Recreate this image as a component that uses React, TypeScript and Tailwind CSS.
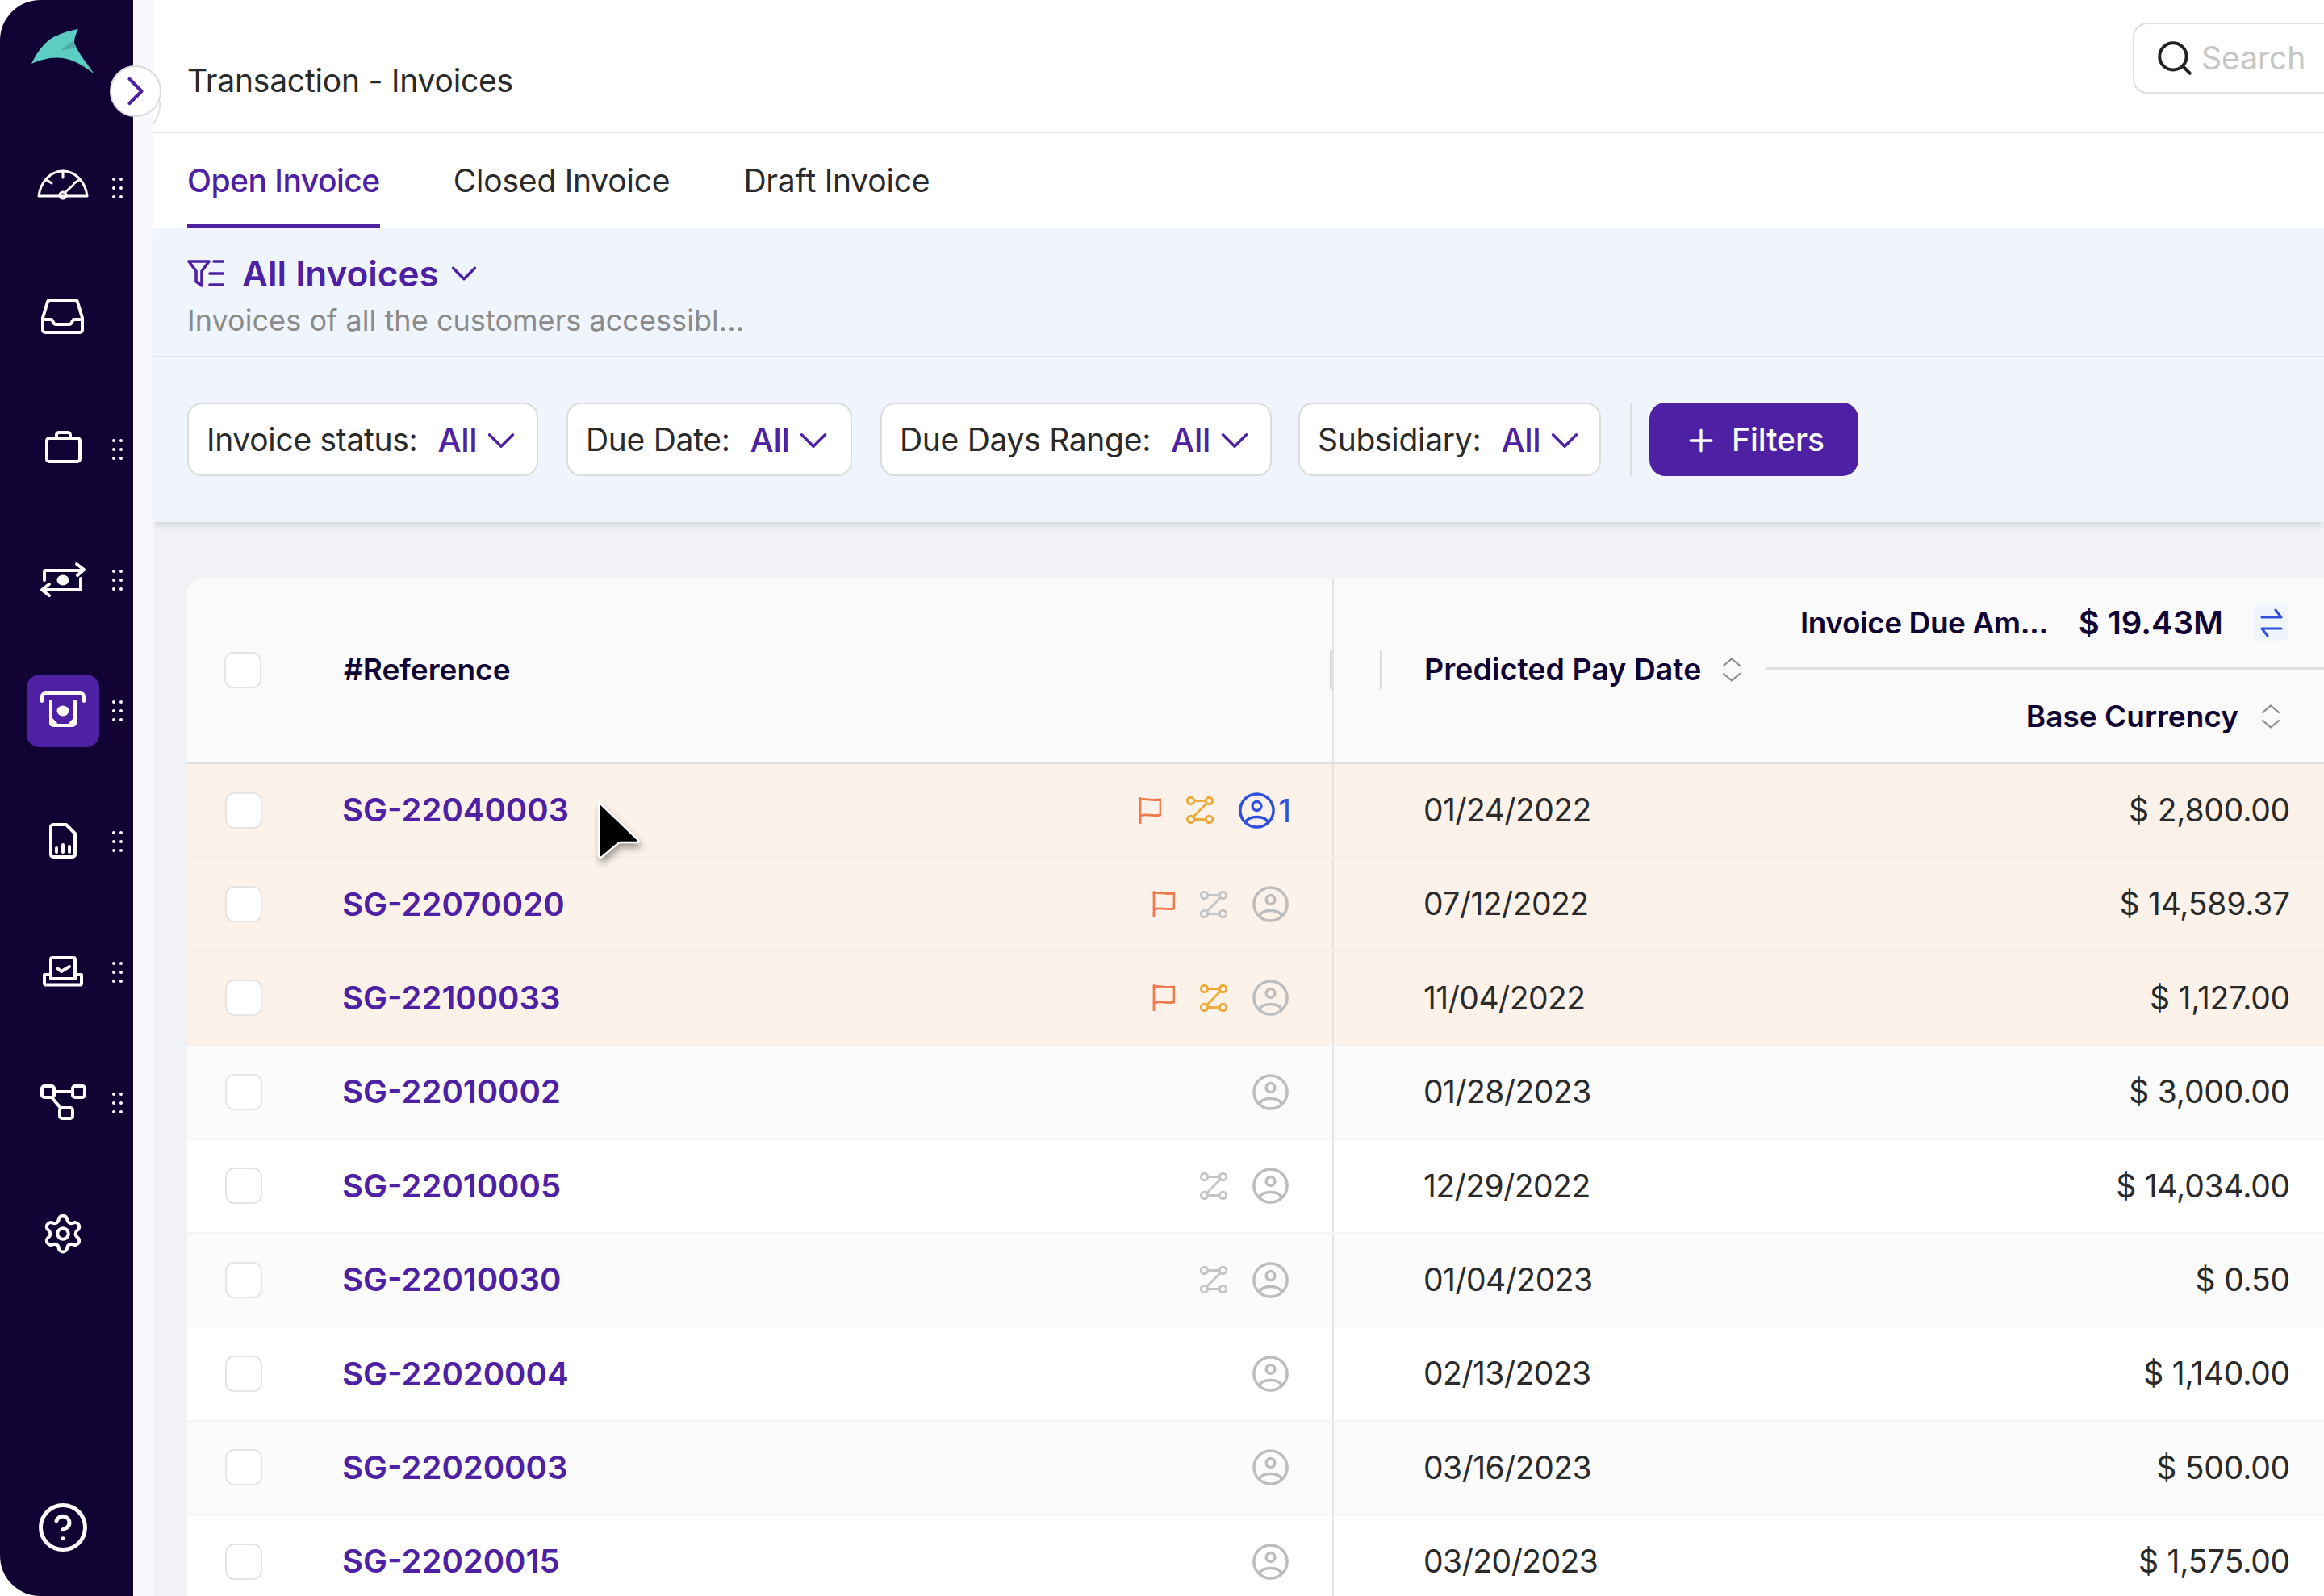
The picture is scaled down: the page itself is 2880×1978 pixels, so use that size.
import { ChevronDown, ChevronRight, CircleHelp, Plus, Search, Settings } from "lucide-react";

type Row = {
  ref: string;
  date: string;
  amount: string;
  flag?: boolean;
  route?: "orange" | "gray";
  assigned?: boolean;
};

const rows: Row[] = [
  { ref: "SG-22040003", date: "01/24/2022", amount: "$ 2,800.00", flag: true, route: "orange", assigned: true },
  { ref: "SG-22070020", date: "07/12/2022", amount: "$ 14,589.37", flag: true, route: "gray" },
  { ref: "SG-22100033", date: "11/04/2022", amount: "$ 1,127.00", flag: true, route: "orange" },
  { ref: "SG-22010002", date: "01/28/2023", amount: "$ 3,000.00" },
  { ref: "SG-22010005", date: "12/29/2022", amount: "$ 14,034.00", route: "gray" },
  { ref: "SG-22010030", date: "01/04/2023", amount: "$ 0.50", route: "gray" },
  { ref: "SG-22020004", date: "02/13/2023", amount: "$ 1,140.00" },
  { ref: "SG-22020003", date: "03/16/2023", amount: "$ 500.00" },
  { ref: "SG-22020015", date: "03/20/2023", amount: "$ 1,575.00" },
];

const filters = [
  { label: "Invoice status:", cls: "w-[435px]" },
  { label: "Due Date:", cls: "ml-[35px] w-[354px]" },
  { label: "Due Days Range:", cls: "ml-[35px] w-[485px]" },
  { label: "Subsidiary:", cls: "ml-[33px] w-[375px]" },
];

function NavSvg({ children }: { children: React.ReactNode }) {
  return (
    <svg width="72" height="72" viewBox="0 0 72 72" fill="none" stroke="white" strokeWidth="4" strokeLinecap="round" strokeLinejoin="round">
      {children}
    </svg>
  );
}

function Dots() {
  return (
    <div className="ml-[16px] grid grid-cols-2 gap-x-[5px] gap-y-[7px]">
      {[0, 1, 2, 3, 4, 5].map((i) => (
        <span key={i} className="h-[4px] w-[4px] rounded-full bg-white" />
      ))}
    </div>
  );
}

function NavItem({ children, dots = true, active = false }: { children: React.ReactNode; dots?: boolean; active?: boolean }) {
  return (
    <div className="flex h-[162px] items-center pl-[33px]">
      <div className={`flex h-[90px] w-[90px] items-center justify-center rounded-[16px] ${active ? "bg-[#4d20a4]" : ""}`}>{children}</div>
      {dots && <Dots />}
    </div>
  );
}

function FlagIcon() {
  return (
    <svg width="28" height="33" viewBox="0 0 28 33" fill="none" stroke="#ee7a4e" strokeWidth="2.8" strokeLinecap="round" strokeLinejoin="round">
      <path d="M2 1.5V32" />
      <path d="M2 3C9 1 14 5 27 3V22C15 24 10 20 2 23" />
    </svg>
  );
}

function RouteIcon({ tone }: { tone: "orange" | "gray" }) {
  const c = tone === "orange" ? "#eeaa3a" : "#c3c5c7";
  return (
    <svg width="34" height="34" viewBox="0 0 34 34" fill="none" stroke={c} strokeWidth="2.9" strokeLinecap="round">
      <circle cx="5.5" cy="5.5" r="4.2" />
      <circle cx="28.5" cy="5.5" r="4.2" />
      <circle cx="5.5" cy="28.5" r="4.2" />
      <circle cx="28.5" cy="28.5" r="4.2" />
      <path d="M10 5.5H24M10 28.5H24M25.5 8.5L8.5 25.5" />
    </svg>
  );
}

function UserIcon({ color }: { color: string }) {
  return (
    <svg width="45" height="45" viewBox="0 0 45 45" fill="none" stroke={color} strokeWidth="3.5">
      <circle cx="22.5" cy="22.5" r="20.6" />
      <circle cx="22.5" cy="17" r="5.4" />
      <path d="M9 36.5C13 28.5 32 28.5 36 36.5" />
    </svg>
  );
}

function SortIcon() {
  return (
    <svg width="24" height="30" viewBox="0 0 24 30" fill="none" stroke="#8a8a8a" strokeWidth="2.2" strokeLinecap="round" strokeLinejoin="round">
      <path d="M2 10L12 1.5L22 10" />
      <path d="M2 20L12 28.5L22 20" />
    </svg>
  );
}

function Checkbox() {
  return <div className="h-[45px] w-[46px] shrink-0 rounded-[11px] border-2 border-[#e5e5e7] bg-white" />;
}

export default function App() {
  return (
    <div className="relative flex h-[1978px] w-[2880px] overflow-hidden bg-white font-['Inter',sans-serif] text-[#2a2a2a]">
      {/* Sidebar */}
      <aside className="flex w-[165px] shrink-0 flex-col rounded-l-[50px] bg-[#100334] pt-[36px]">
        <svg className="ml-[39px] mb-[60px] shrink-0" width="78" height="56" viewBox="0 0 78 56">
          <path d="M0 43C6 30 14 19 24 12C34 6 46 2 58 0C55 5 53 11 53 17C58 30 70 44 78 56C66 46 52 38 39 36C26 34 11 38 0 43Z" fill="#5ccdc2" />
          <path d="M36 27C41 22 46 18 52 15C53 19 54 21 55 24C48 24 42 25 36 27Z" fill="#4fa9a4" />
        </svg>
        <NavItem>
          <NavSvg>
            <g transform="translate(0 -5)">
              <path d="M6 51H31M41 51H66C64 34 52 20 36 20C20 20 8 34 6 51Z" strokeWidth="3" />
              <path d="M36 20V28M16 31L22 35M56 31L50 35M39 46L49 37" strokeWidth="3" />
              <circle cx="36" cy="50" r="4" strokeWidth="3" />
            </g>
          </NavSvg>
        </NavItem>
        <NavItem dots={false}>
          <NavSvg>
            <g transform="translate(0 -3)">
              <path d="M20 16H51A3 3 0 0 1 54 18L60 38V53A3 3 0 0 1 57 56H14A3 3 0 0 1 11 53V38L17 18A3 3 0 0 1 20 16Z" />
              <path d="M11 40H22L25 45A3 3 0 0 0 27 46H44A3 3 0 0 0 46 45L49 40H60" />
            </g>
          </NavSvg>
        </NavItem>
        <NavItem>
          <NavSvg>
            <rect x="16" y="22" width="41" height="29" rx="3" />
            <path d="M28 22V18A3 3 0 0 1 31 15H42A3 3 0 0 1 45 18V22" />
          </NavSvg>
        </NavItem>
        <NavItem>
          <NavSvg>
            <path d="M13 36V26A2 2 0 0 1 15 24H60M53 16L62 23L54 30" />
            <path d="M58 34V46A2 2 0 0 1 56 48H11M19 41L10 48L19 55" />
            <ellipse cx="36" cy="36" rx="7.5" ry="6.5" fill="white" stroke="none" />
          </NavSvg>
        </NavItem>
        <NavItem active>
          <NavSvg>
            <path d="M10 24V18A4 4 0 0 1 14 14H58A4 4 0 0 1 62 18V24" />
            <path d="M21 24V51A3 3 0 0 0 24 54H48A3 3 0 0 0 51 51V24M21 46L27 52M51 46L45 52" />
            <ellipse cx="36" cy="36" rx="7.5" ry="6.5" fill="white" stroke="none" />
          </NavSvg>
        </NavItem>
        <NavItem>
          <NavSvg>
            <path d="M24 15H40L51 26V52A3 3 0 0 1 48 55H24A3 3 0 0 1 21 52V18A3 3 0 0 1 24 15Z" />
            <path d="M28 49V44M36 49V40M44 49V42" />
          </NavSvg>
        </NavItem>
        <NavItem>
          <NavSvg>
            <path d="M21 44V20A2 2 0 0 1 23 18H49A2 2 0 0 1 51 20V44Z" />
            <path d="M19 39H13V50A1.5 1.5 0 0 0 14.5 51.5H57.5A1.5 1.5 0 0 0 59 50V39H53" />
            <path d="M29 31L34 35L44 29" />
          </NavSvg>
        </NavItem>
        <NavItem>
          <NavSvg>
            <rect x="10" y="15" width="15" height="14" rx="3" />
            <rect x="48" y="15" width="15" height="14" rx="3" />
            <rect x="32" y="42" width="16" height="13" rx="3" />
            <path d="M25 22H48M22 29L33 42" />
          </NavSvg>
        </NavItem>
        <NavItem dots={false}>
          <Settings size={54} color="white" strokeWidth={1.8} />
        </NavItem>
        <div className="mt-auto flex justify-center pb-[52px]">
          <CircleHelp size={66} color="white" strokeWidth={1.8} className="-translate-x-[5px]" />
        </div>
      </aside>

      <div className="w-[24px] shrink-0 bg-[#f8f9ff]" />

      {/* Main */}
      <main className="flex min-w-0 flex-1 flex-col">
        <header className="flex h-[165px] shrink-0 items-start justify-between border-b-2 border-[#e3e3e3]">
          <h1 className="ml-[43px] mt-[75px] text-[39px] leading-[50px] tracking-[-0.2px]">Transaction - Invoices</h1>
          <div className="mt-[28px] mr-[-190px] flex h-[88px] w-[427px] shrink-0 items-center gap-[8px] rounded-[18px] border-2 border-[#dedede] pl-[25px]">
            <Search size={50} color="#222" strokeWidth={1.9} />
            <span className="text-[39px] text-[#c6c6c6]">Search</span>
          </div>
        </header>

        <nav className="flex h-[117px] shrink-0 items-stretch gap-[91px] pl-[43px] text-[39px] tracking-[-0.2px]">
          <div className="flex items-center border-b-[5px] border-[#4d20a4] pt-[7px] font-medium tracking-[-0.5px] text-[#4d20a4]">Open Invoice</div>
          <div className="flex items-center pt-[2px]">Closed Invoice</div>
          <div className="flex items-center pt-[2px]">Draft Invoice</div>
        </nav>

        <section className="relative z-10 h-[365px] shrink-0 bg-[#f0f4fd] shadow-[0_7px_7px_-3px_rgba(0,0,0,0.12)]">
          <div className="h-[161px] border-b-2 border-[#e3e5ea] pl-[43px] pt-[30px]">
            <div className="flex items-center text-[#4d20a4]">
              <svg width="46" height="36" viewBox="0 0 46 36" fill="none" stroke="#4d20a4" strokeWidth="3.6" strokeLinecap="round" strokeLinejoin="round">
                <path d="M2 3H27L18 15V33L11 28V15Z" />
                <path d="M33 3H45M28 18H45M28 32H45" />
              </svg>
              <span className="ml-[22px] text-[44px] font-semibold leading-[48px]">All Invoices</span>
              <ChevronDown size={54} className="ml-[4px]" strokeWidth={1.5} />
            </div>
            <p className="mt-[9px] text-[36px] leading-[44px] tracking-[0.05px] text-[#8b8b8b]">Invoices of all the customers accessibl...</p>
          </div>
          <div className="flex items-center pl-[43px] pt-[56px]">
            {filters.map((f) => (
              <div key={f.label} className={`flex h-[91px] shrink-0 items-center rounded-[18px] border-2 border-[#dcdcdc] bg-white pl-[22px] pt-[2px] text-[39px] tracking-[-0.3px] ${f.cls}`}>
                <span>{f.label}</span>
                <span className="ml-[25px] text-[41px] font-medium text-[#4d20a4]">All</span>
                <ChevronDown size={58} color="#4d20a4" strokeWidth={1.4} className="ml-[1px]" />
              </div>
            ))}
            <div className="ml-[36px] h-[91px] w-[3px] bg-[#dcdde0]" />
            <button className="ml-[21px] flex h-[91px] w-[259px] items-center justify-center gap-[16px] rounded-[20px] bg-[#4d20a4] pt-[2px] text-[39px] font-medium text-white">
              <Plus size={44} strokeWidth={1.8} />
              Filters
            </button>
          </div>
        </section>

        {/* Table */}
        <section className="flex-1 bg-[#f1f2f6] pl-[43px] pt-[69px]">
          <div className="overflow-hidden rounded-tl-[20px] bg-white">
            <div className="flex h-[231px] border-b-[3px] border-[#e0e0e0] bg-[#fafafa] text-[#100334]">
              <div className="flex w-[1419px] shrink-0 items-center pl-[46px]">
                <Checkbox />
                <span className="ml-[102px] text-[37px] font-semibold">#Reference</span>
                <div className="ml-auto h-[48px] w-[3px] bg-[#dcdcdc]" />
              </div>
              <div className="flex flex-1 items-center border-l-2 border-[#e3e3e3]">
                <div className="ml-[57px] h-[48px] w-[3px] bg-[#dcdcdc]" />
                <span className="ml-[52px] text-[37.5px] font-semibold">Predicted Pay Date</span>
                <div className="ml-[26px]"><SortIcon /></div>
                <div className="ml-[31px] flex h-full flex-1 flex-col text-[37px] font-semibold">
                  <div className="flex h-[114px] items-center justify-end border-b-[3px] border-[#e0e0e0] pr-[44px]">
                    <span className="tracking-[-0.45px]">Invoice Due Am...</span>
                    <span className="ml-[38px] text-[40px]">$ 19.43M</span>
                    <div className="ml-[38px] flex h-[46px] w-[43px] items-center justify-center rounded-[8px] bg-[#f0f4fd]">
                      <svg width="28" height="36" viewBox="0 0 28 36" fill="none" stroke="#2f50e0" strokeWidth="3" strokeLinecap="round" strokeLinejoin="round">
                        <path d="M2 11H26M19 2L26 11" />
                        <path d="M26 25H2M9 34L2 25" />
                      </svg>
                    </div>
                  </div>
                  <div className="flex flex-1 items-center justify-end pr-[54px] pt-[2px]">
                    <span>Base Currency</span>
                    <div className="ml-[28px]"><SortIcon /></div>
                  </div>
                </div>
              </div>
            </div>

            {rows.map((r, i) => (
              <div
                key={r.ref}
                className={`flex h-[116.4px] border-b-2 ${i < 3 ? "border-[#f7efe9] bg-[#fdf2ea]" : i % 2 === 1 ? "border-[#f4f4f5] bg-[#fbfbfb]" : "border-[#f4f4f5] bg-white"}`}
              >
                <div className="flex w-[1419px] shrink-0 items-center pl-[47px]">
                  <Checkbox />
                  <span className="ml-[99px] text-[40px] font-semibold text-[#4d20a4]">{r.ref}</span>
                  <div className="ml-auto flex items-center gap-[31px] pr-[54px]">
                    {r.flag && <FlagIcon />}
                    {r.route && <RouteIcon tone={r.route} />}
                    {r.assigned ? (
                      <div className="-mr-[3px] flex items-center gap-[4px] text-[#2f50e0]">
                        <UserIcon color="#2f50e0" />
                        <span className="text-[39px] leading-none">1</span>
                      </div>
                    ) : (
                      <UserIcon color="#bcbdbf" />
                    )}
                  </div>
                </div>
                <div className="flex flex-1 items-center border-l-2 border-[#e3e3e3] pl-[111px] pr-[42px] text-[39px] tracking-[-0.5px]">
                  <span>{r.date}</span>
                  <span className="ml-auto tracking-[-0.2px]">{r.amount}</span>
                </div>
              </div>
            ))}
          </div>
        </section>
      </main>

      {/* Collapse toggle */}
      <svg className="absolute left-[186px] top-[125px]" width="14" height="30" viewBox="0 0 14 30" fill="none" stroke="#e2e2e2" strokeWidth="2">
        <path d="M12 0C13 10 10 22 3 29" />
      </svg>
      <div className="absolute left-[136px] top-[81px] flex h-[64px] w-[64px] items-center justify-center rounded-full border-2 border-[#dcdcdc] bg-white">
        <ChevronRight size={60} color="#4d20a4" strokeWidth={1.7} className="shrink-0" />
      </div>

      {/* Cursor */}
      <svg className="absolute left-[736px] top-[990px] drop-shadow-[2px_6px_4px_rgba(0,0,0,0.35)]" width="64" height="80" viewBox="0 0 64 80">
        <path d="M7 5L55 51C56 52 55 54 54 54H33C31 54 30 55 29 56L10 72C8 73 6 72 6 70V6C6 4 6 4 7 5Z" fill="black" stroke="white" strokeWidth="2.5" strokeLinejoin="round" />
      </svg>
    </div>
  );
}
